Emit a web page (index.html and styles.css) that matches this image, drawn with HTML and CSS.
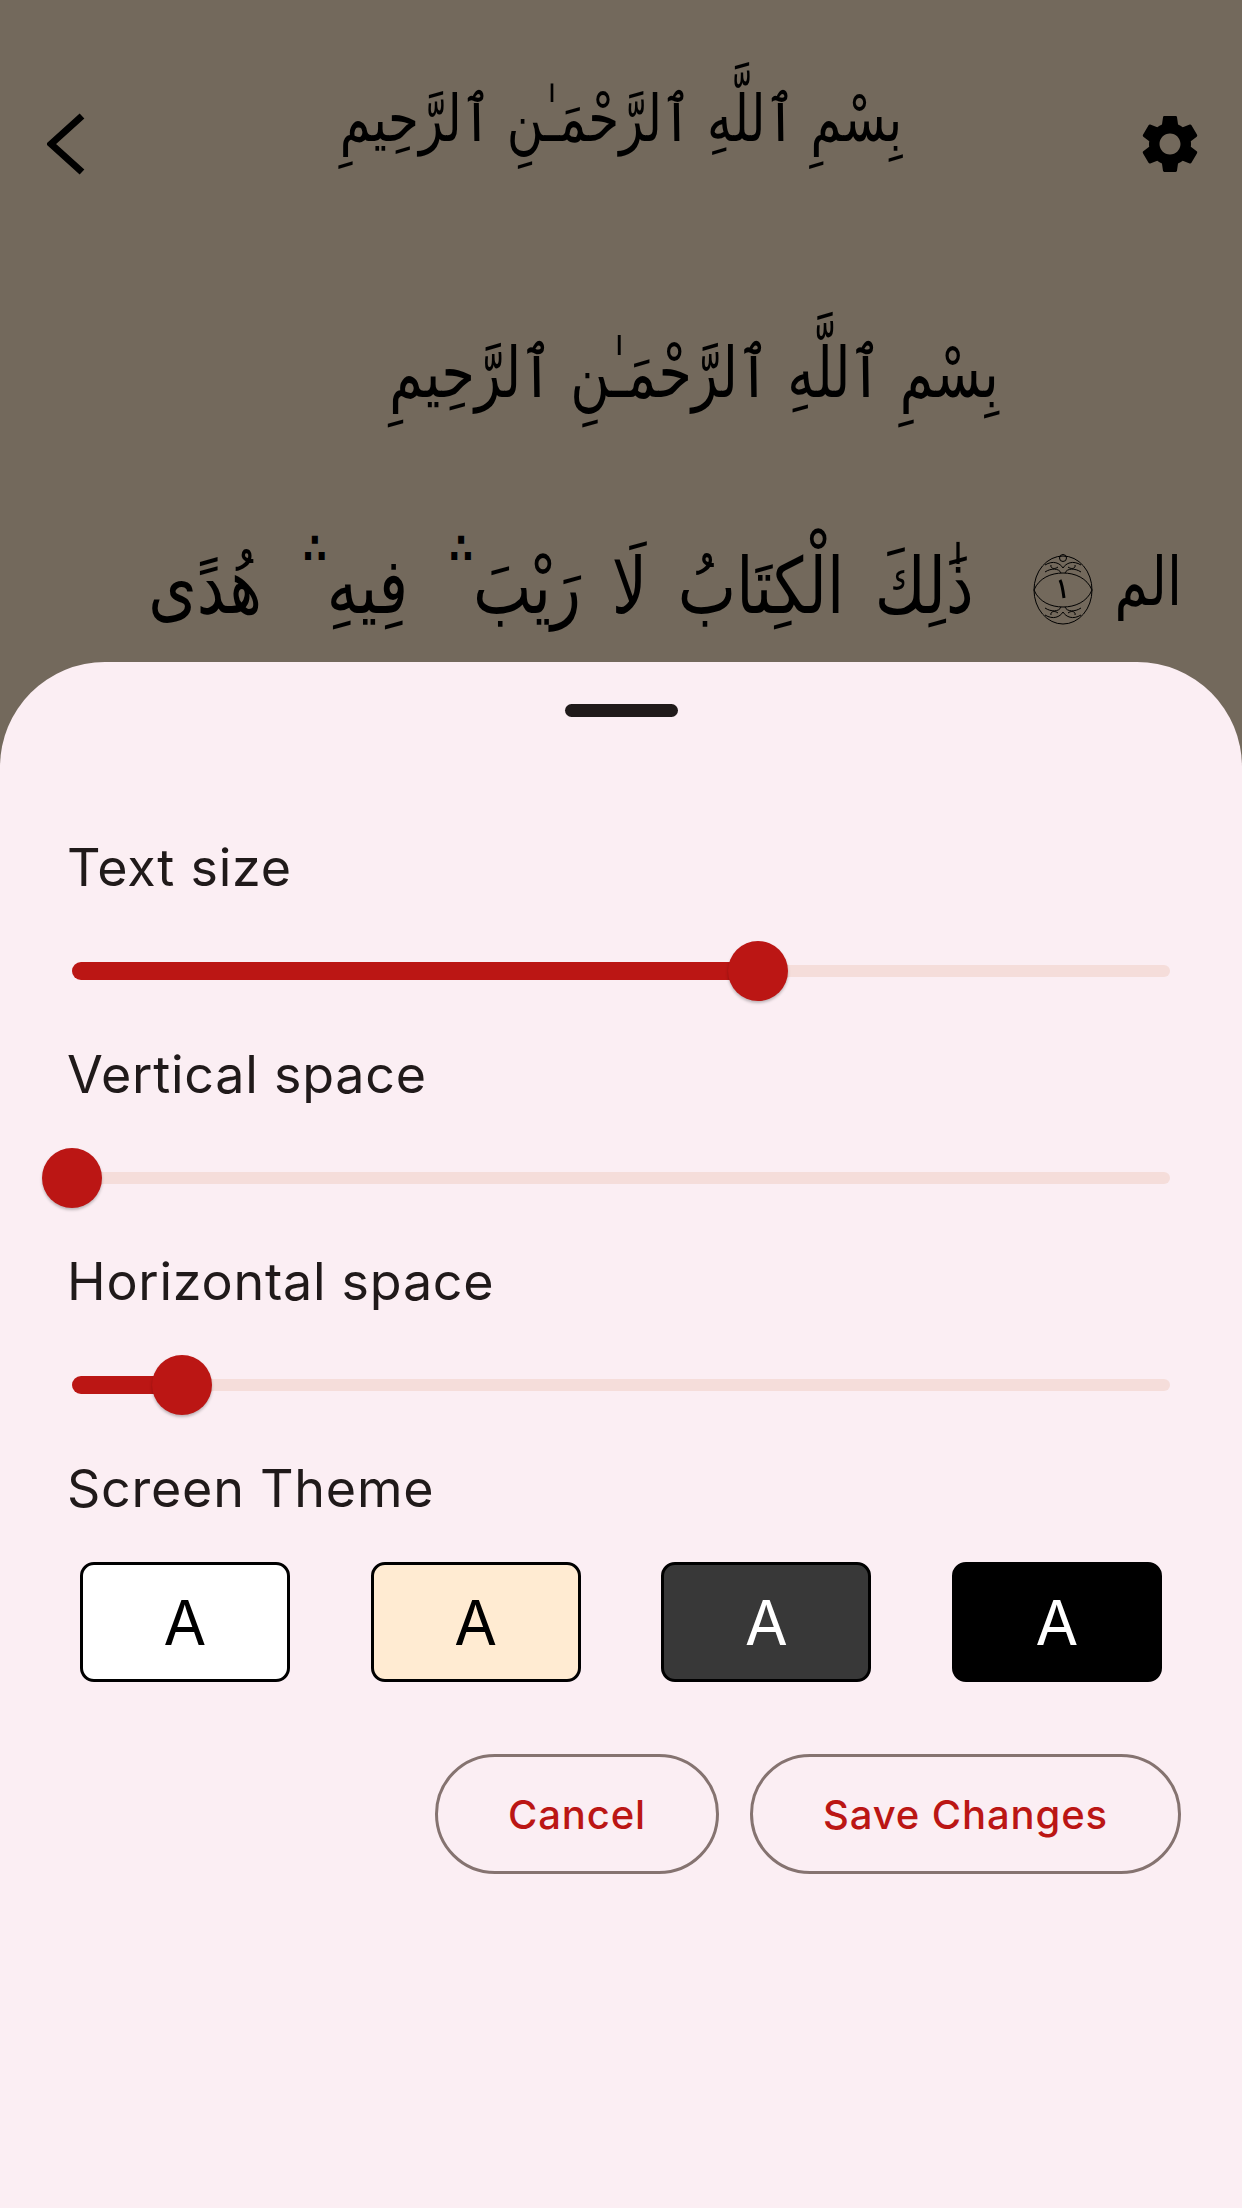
FILE: index.html
```html
<!DOCTYPE html>
<html>
<head>
<meta charset="UTF-8">
<title>Reader settings</title>
<link rel="stylesheet" href="styles.css">
</head>
<body>

<div class="reader">
  <div class="topbar">
    <svg class="back" viewBox="0 0 40 64"><polyline points="35,4 4,32 35,60"/></svg>
    <div class="title" dir="rtl" lang="ar">بِسْمِ ٱللَّهِ ٱلرَّحْمَـٰنِ ٱلرَّحِيمِ</div>
    <svg class="gear" viewBox="0 0 24 24"><path d="M19.14 12.94c.04-.3.06-.61.06-.94 0-.32-.02-.64-.07-.94l2.03-1.58c.18-.14.23-.41.12-.61l-1.92-3.32c-.12-.22-.37-.29-.59-.22l-2.39.96c-.5-.38-1.03-.7-1.62-.94l-.36-2.54c-.04-.24-.24-.41-.48-.41h-3.84c-.24 0-.43.17-.47.41l-.36 2.54c-.59.24-1.13.57-1.62.94l-2.39-.96c-.22-.08-.47 0-.59.22L2.74 8.87c-.12.21-.08.47.12.61l2.03 1.58c-.05.3-.09.63-.09.94s.02.64.07.94l-2.03 1.58c-.18.14-.23.41-.12.61l1.92 3.32c.12.22.37.29.59.22l2.39-.96c.5.38 1.03.7 1.62.94l.36 2.54c.05.24.24.41.48.41h3.84c.24 0 .44-.17.47-.41l.36-2.54c.59-.24 1.13-.56 1.62-.94l2.39.96c.22.08.47 0 .59-.22l1.92-3.32c.12-.22.07-.47-.12-.61l-2.01-1.58zM12 15.6c-1.98 0-3.6-1.62-3.6-3.6s1.62-3.6 3.6-3.6 3.6 1.62 3.6 3.6-1.62 3.6-3.6 3.6z"/></svg>
  </div>
  <div class="basmala" dir="rtl" lang="ar">بِسْمِ ٱللَّهِ ٱلرَّحْمَـٰنِ ٱلرَّحِيمِ</div>
  <div class="verse" dir="rtl" lang="ar">
    <span>الم</span>
    <svg class="marker" viewBox="0 0 60 74">
      <ellipse cx="30" cy="38" rx="29" ry="34"/>
      <path d="M1 38C6 26 18 21 30 21S54 26 59 38M1 38C6 50 18 55 30 55S54 50 59 38"/>
      <path d="M30 16c-3-5-10-8-18-3M30 16c3-5 10-8 18-3M28 21c-2-5-10-5-16-1M32 21c2-5 10-5 16-1"/>
      <path d="M25 15c-4 3-8 1-7-2M35 15c4 3 8 1 7-2"/>
      <path d="M30 60c-3 5-10 8-18 3M30 60c3 5 10 8 18 3M28 55c-2 5-10 5-16 1M32 55c2 5 10 5 16 1"/>
      <path d="M25 61c-4-3-8-1-7 2M35 61c4-3 8-1 7 2"/>
      <circle cx="30" cy="6" r="3.5"/>
      <path class="digit" d="M27 28c2 4 3 10 4 18"/>
    </svg>
    <span class="verse-text">ذَٰلِكَ الْكِتَابُ لَا رَيْبَ<span class="stop">∴</span> فِيهِ<span class="stop">∴</span> هُدًى</span>
  </div>
</div>

<div class="sheet">
  <div class="handle"></div>

  <div class="setting">
    <div class="label">Text size</div>
    <div class="slider">
      <div class="track"></div>
      <div class="active" style="width: 686px"></div>
      <div class="thumb" style="left: 686px"></div>
    </div>
  </div>

  <div class="setting">
    <div class="label">Vertical space</div>
    <div class="slider">
      <div class="track"></div>
      <div class="thumb" style="left: 0px"></div>
    </div>
  </div>

  <div class="setting">
    <div class="label">Horizontal space</div>
    <div class="slider">
      <div class="track"></div>
      <div class="active" style="width: 110px"></div>
      <div class="thumb" style="left: 110px"></div>
    </div>
  </div>

  <div class="label">Screen Theme</div>
  <div class="themes">
    <div class="theme white">A</div>
    <div class="theme sepia">A</div>
    <div class="theme gray">A</div>
    <div class="theme black">A</div>
  </div>

  <div class="actions">
    <button class="cancel">Cancel</button>
    <button class="save">Save Changes</button>
  </div>
</div>

</body>
</html>
```

FILE: styles.css
```css
html, body {
  margin: 0;
  height: 2208px;
}

body {
  width: 1242px;
  background-color: #73695C;
  font-family: Inter, Roboto, sans-serif;
  display: flex;
  flex-direction: column;
  overflow: hidden;
}

/* text behind the sheet */
.reader {
  height: 662px;
  flex: none;
  overflow: hidden;
  color: #000;
  font-family: "DejaVu Sans", sans-serif;
}

.topbar {
  display: flex;
  align-items: center;
  justify-content: space-between;
  padding: 112px 37px 0 47px;
  height: 64px;
}

.back {
  width: 40px;
  height: 64px;
  fill: none;
  stroke: #000;
  stroke-width: 7;
}

.gear {
  width: 70px;
  height: 70px;
  fill: #000;
}

.title {
  font-size: 50px;
  line-height: 64px;
  padding: 0 0 38px 20px;
  text-align: center;
  white-space: nowrap;
  transform: scaleY(1.3);
}

.basmala {
  margin-top: 158px;
  padding-left: 146px;
  font-size: 54px;
  line-height: 80px;
  text-align: center;
  white-space: nowrap;
  transform: scaleY(1.3);
}

.verse {
  margin-top: 123px;
  padding-right: 60px;
  font-size: 54px;
  line-height: 80px;
  white-space: nowrap;
  display: flex;
  align-items: center;
}

.verse > span {
  transform: scaleY(1.25);
}

.verse-text {
  font-size: 62px;
  word-spacing: 11px;
}

.stop {
  display: inline-block;
  width: 24px;
  margin-inline-end: 10px;
  font-size: 34px;
  font-weight: bold;
  line-height: 36px;
  vertical-align: 40px;
}

.marker {
  width: 60px;
  height: 74px;
  margin: 15px 22px 0 59px;
  fill: none;
  stroke: #000;
  stroke-width: 1;
  flex: none;
}

.marker .digit {
  stroke-width: 3;
}

/* bottom sheet */
.sheet {
  flex: 1;
  background-color: #FBEEF3;
  border-radius: 105px 105px 0 0;
  padding: 42px 67px 0 67px;
  color: #201A1A;
}

.handle {
  width: 113px;
  height: 13px;
  border-radius: 7px;
  background-color: #201A1A;
  margin: 0 auto;
}

.setting {
  height: 207px;
}

.handle + .setting {
  margin-top: 121px;
}

.label {
  font-size: 52px;
  line-height: 60px;
  letter-spacing: 0.75px;
}

.slider {
  position: relative;
  height: 60px;
  margin: 43px 0 0 5px;
  width: 1098px;
}

.track {
  position: absolute;
  left: 0;
  right: 0;
  top: 24px;
  height: 12px;
  border-radius: 6px;
  background-color: #F5DDDA;
}

.active {
  position: absolute;
  left: 0;
  top: 21px;
  height: 18px;
  border-radius: 9px;
  background-color: #BB1614;
}

.thumb {
  position: absolute;
  top: 0;
  width: 60px;
  height: 60px;
  margin-left: -30px;
  border-radius: 50%;
  background-color: #BB1614;
  box-shadow: 0 2px 3px rgba(0, 0, 0, 0.25);
}

.themes {
  display: flex;
  justify-content: space-between;
  margin: 43px 13px 0 13px;
}

.theme {
  width: 210px;
  height: 120px;
  box-sizing: border-box;
  border: 3px solid #000;
  border-radius: 14px;
  display: flex;
  align-items: center;
  justify-content: center;
  font-size: 62px;
}

.white { background-color: #FFFFFF; color: #000; }
.sepia { background-color: #FFEBD2; color: #000; }
.gray { background-color: #383838; color: #FFF; }
.black { background-color: #000000; color: #FFF; }

.actions {
  display: flex;
  justify-content: flex-end;
  gap: 31px;
  margin: 72px -6px 0 0;
}

button {
  height: 120px;
  box-sizing: border-box;
  background: none;
  border: 3px solid #857370;
  border-radius: 60px;
  color: #BB1614;
  font-family: Inter, Roboto, sans-serif;
  font-size: 40px;
  font-weight: 500;
  letter-spacing: 0.9px;
  padding: 0;
}

.cancel { width: 284px; }
.save { width: 431px; }
```
